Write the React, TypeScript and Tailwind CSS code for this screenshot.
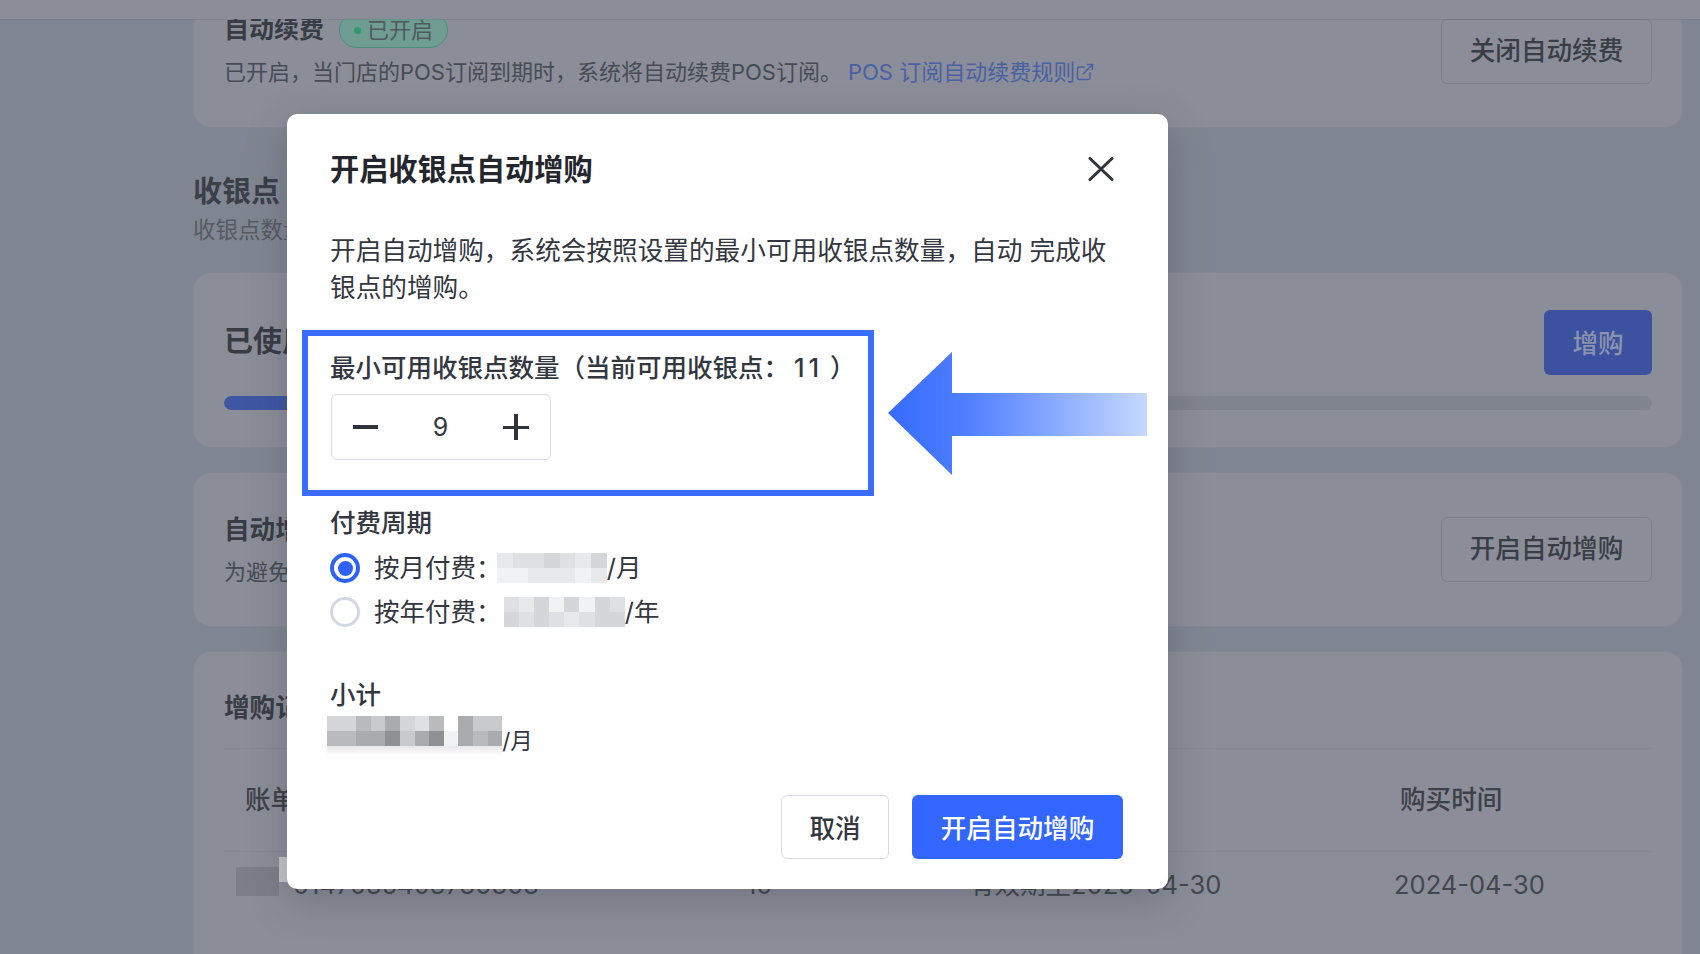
import { ExternalLink } from "lucide-react";

const SHADES: Record<string, string> = {
  a: "bg-[#f1f2f3]",
  b: "bg-[#e8e9eb]",
  c: "bg-[#dfe0e3]",
  d: "bg-[#d5d6d9]",
  e: "bg-[#c9cacd]",
  f: "bg-[#b9babd]",
  g: "bg-[#aaabae]",
  h: "bg-[#8f9094]",
  w: "bg-white",
};

function Mosaic({ rows, cell }: { rows: string[]; cell: string }) {
  return (
    <div className="flex flex-col">
      {rows.map((row, i) => (
        <div key={i} className="flex">
          {row.split("").map((s, j) => (
            <div key={j} className={`${cell} ${SHADES[s]}`} />
          ))}
        </div>
      ))}
    </div>
  );
}

function Card({ className, children }: { className: string; children: React.ReactNode }) {
  return (
    <div className={`relative rounded-[18px] border border-[#848894] bg-[#8b8e98] px-[30px] ${className}`}>
      {children}
    </div>
  );
}

function GhostButton({ children }: { children: React.ReactNode }) {
  return (
    <div className="flex h-[65px] w-[211px] shrink-0 items-center justify-center rounded-[6px] border border-[#7b7f8b] text-[25.6px] font-medium text-[#393d46]">
      {children}
    </div>
  );
}

function Background() {
  return (
    <div className="relative h-[954px] overflow-hidden bg-[#808691]">
      <div className="relative z-10 h-[19px] bg-[#8b8e98] shadow-[0_1px_1px_rgba(60,65,80,0.12)]" />
      <div className="ml-[193px] mr-[17px] -mt-[10px]">
        <Card className="flex h-[119px] justify-between">
          <div className="pt-[3px]">
            <div className="flex h-[34px] items-center gap-[15px]">
              <span className="text-[25px] font-semibold text-[#383c45]">自动续费</span>
              <span className="flex h-[36px] w-[109px] items-center justify-center gap-[6px] rounded-full border border-[#4d8d7c] bg-[#6f9d92] text-[22px] text-[#4f5a5e]">
                <span className="h-[7px] w-[7px] rounded-full bg-[#2f9a6b]" />
                已开启
              </span>
            </div>
            <div className="mt-[8px] flex items-center text-[22px] leading-[34px] text-[#474b55]">
              已开启，当门店的POS订阅到期时，系统将自动续费POS订阅。
              <span className="ml-[6px] flex items-center text-[#4a60a6]">
                POS 订阅自动续费规则
                <ExternalLink className="h-[20px] w-[20px]" strokeWidth={1.8} />
              </span>
            </div>
          </div>
          <div className="pt-[9px]">
            <GhostButton>关闭自动续费</GhostButton>
          </div>
        </Card>

        <div className="mt-[44px] h-[100px]">
          <div className="text-[29px] font-semibold leading-[40px] text-[#3b3f48]">收银点</div>
          <div className="mt-[2px] text-[22.5px] leading-[32px] text-[#565a64]">收银点数量</div>
        </div>

        <Card className="h-[176px]">
          <div className="flex h-[123px] items-start justify-between">
            <span className="mt-[49px] text-[29px] font-semibold leading-[40px] text-[#383c45]">已使用</span>
            <div className="mt-[37px] flex h-[65px] w-[108px] items-center justify-center rounded-[6px] bg-[#3c52a0] pt-[3px] text-[25.6px] font-medium text-[#8b93ae]">
              增购
            </div>
          </div>
          <div className="h-[14px] overflow-hidden rounded-full bg-[#80848f]">
            <div className="h-full w-[200px] rounded-full bg-[#3f57a3]" />
          </div>
        </Card>

        <Card className="mt-[24px] flex h-[155px] items-center justify-between">
          <div>
            <div className="text-[25.6px] font-semibold leading-[36px] text-[#383c45]">自动增购</div>
            <div className="mt-[8px] text-[22px] leading-[32px] text-[#474b55]">为避免</div>
          </div>
          <GhostButton>开启自动增购</GhostButton>
        </Card>

        <Card className="mt-[24px] h-[330px]">
          <div className="flex h-[97px] items-end border-b border-[#858994] pb-[22px]">
            <span className="text-[25.6px] font-semibold leading-[36px] text-[#383c45]">增购记录</span>
          </div>
          <div className="grid h-[103px] grid-cols-[520px_300px_356px_1fr] items-center border-b border-[#858994] whitespace-nowrap text-[25.6px] font-medium text-[#3c4049]">
            <span className="pl-[21px]">账单编号</span>
            <span />
            <span />
            <span>购买时间</span>
          </div>
          <div className="grid h-[66px] grid-cols-[520px_300px_356px_1fr] items-center whitespace-nowrap text-[25.5px] text-[#43474f]">
            <span className="pl-[69px]">0147035403730303</span>
            <span className="pl-[2px]">10</span>
            <span className="-ml-[75px]">有效期至2025-04-30</span>
            <span className="-ml-[6px]">2024-04-30</span>
          </div>
          <div className="absolute right-[245px] top-[302px] h-[3px] w-[50px] bg-[#3c52a0]" />
        </Card>
      </div>
      <div className="absolute left-[236px] top-[867px] h-[29px] w-[43px] bg-[#7c7f8a]" />
      <div className="absolute left-[279px] top-[857px] h-[25px] w-[8px] bg-[#c4c5c8]" />
    </div>
  );
}

function Arrow() {
  return (
    <svg className="absolute left-[601px] top-[238px] blur-[0.6px]" width="262" height="126" viewBox="0 0 262 126">
      <defs>
        <linearGradient id="arrowFill" x1="0" x2="1" y1="0" y2="0">
          <stop offset="0" stopColor="#356bff" />
          <stop offset="0.3" stopColor="#4f7eff" />
          <stop offset="1" stopColor="#c6d8ff" />
        </linearGradient>
      </defs>
      <path d="M0 61 L64 0 L64 41 L259 41 L259 84 L64 84 L64 123 Z" fill="url(#arrowFill)" />
    </svg>
  );
}

function Radio({ checked }: { checked?: boolean }) {
  if (checked) {
    return (
      <span className="flex h-[30px] w-[30px] items-center justify-center rounded-full border-[4px] border-[#2e62f6]">
        <span className="h-[15px] w-[15px] rounded-full bg-[#2e62f6]" />
      </span>
    );
  }
  return <span className="h-[30px] w-[30px] rounded-full border-[3.5px] border-[#d3d7e2]" />;
}

function Modal() {
  return (
    <div className="absolute left-[287px] top-[114px] z-20 flex h-[775px] w-[881px] flex-col rounded-[10px] bg-white px-[43px] text-[#33373f] shadow-[0_12px_40px_rgba(40,45,60,0.25)]">
      <div className="mt-[36px] flex h-[40px] items-center justify-between">
        <h2 className="text-[29.2px] font-semibold text-[#23262c]">开启收银点自动增购</h2>
        <svg className="mr-[11px] -mt-[2px]" width="26" height="24" viewBox="0 0 26 24" fill="none" stroke="#2f333b" strokeWidth="3" strokeLinecap="round">
          <path d="M2 1.5 L24 22.5 M24 1.5 L2 22.5" />
        </svg>
      </div>
      <p className="mt-[42px] w-[792px] text-[25.65px] leading-[37px]">
        开启自动增购，系统会按照设置的最小可用收银点数量，自动 完成收银点的增购。
      </p>
      <div className="mt-[43px] whitespace-nowrap text-[25.5px] font-medium leading-[38px]">
        最小可用收银点数量（当前可用收银点：<span className="ml-[5px] tracking-[4px]">11</span> ）
      </div>
      <div className="ml-[1px] mt-[7px] flex h-[66px] w-[220px] items-center justify-between rounded-[6px] border-[1.5px] border-[#d8dbe1] px-[21px]">
        <span className="h-[3.5px] w-[25px] bg-[#2f333b]" />
        <span className="pt-[2px] text-[25px]">9</span>
        <span className="relative h-[26px] w-[26px]">
          <span className="absolute left-0 top-[11.5px] h-[3.5px] w-[26px] bg-[#2f333b]" />
          <span className="absolute left-[11.5px] top-0 h-[26px] w-[3.5px] bg-[#2f333b]" />
        </span>
      </div>

      <div className="mt-[44px] text-[25.5px] font-medium leading-[38px]">付费周期</div>
      <div className="mt-[11px] flex h-[30px] items-center text-[25.5px] leading-[30px]">
        <Radio checked />
        <span className="ml-[14px] w-[123px] whitespace-nowrap">按月付费：</span>
        <Mosaic cell="h-[15px] w-[15.7px]" rows={["bccdcbd", "aabbbab"]} />
        <span>/月</span>
      </div>
      <div className="mt-[14px] flex h-[30px] items-center text-[25.5px] leading-[30px]">
        <Radio />
        <span className="ml-[14px] w-[130px] whitespace-nowrap">按年付费：</span>
        <Mosaic cell="h-[15px] w-[15.1px]" rows={["cbdadadc", "dcdcbcdd"]} />
        <span>/年</span>
      </div>

      <div className="mt-[50px] text-[25.5px] font-medium leading-[36px]">小计</div>
      <div className="-ml-[3px] mt-[3px] flex items-start">
        <div>
          <Mosaic cell="h-[15px] w-[14.6px]" rows={["ddfegdcfwgee", "ffggheghagfg"]} />
          <div className="h-[10px] bg-gradient-to-b from-[#e8e8ea] to-white" />
        </div>
        <span className="mt-[10px] text-[22.5px] leading-[30px]">/月</span>
      </div>

      <div className="mb-[30px] mr-[2px] mt-auto flex justify-end gap-[23px]">
        <div className="flex h-[64px] w-[108px] items-center justify-center rounded-[6px] border-[1.5px] border-[#d8dbe1] pt-[4px] text-[25.6px] font-medium">
          取消
        </div>
        <div className="flex h-[64px] w-[211px] items-center justify-center rounded-[6px] bg-[#3366ff] pt-[4px] text-[25.6px] font-medium text-white">
          开启自动增购
        </div>
      </div>

      <div className="absolute left-[15px] top-[216px] h-[166px] w-[572px] border-[6px] border-[#3a6cff]" />
      <Arrow />
    </div>
  );
}

export default function App() {
  return (
    <div className="relative h-[954px] w-[1700px] overflow-hidden font-['Inter','Noto_Sans_CJK_SC',sans-serif]">
      <Background />
      <Modal />
    </div>
  );
}
